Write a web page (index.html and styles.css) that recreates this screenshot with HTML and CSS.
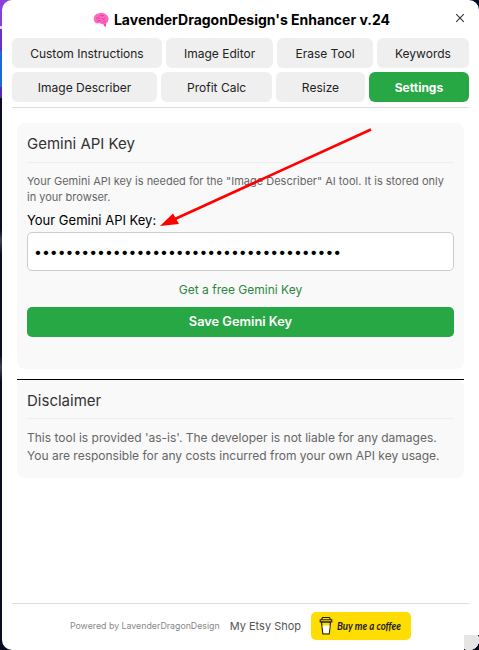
FILE: index.html
```html
<!DOCTYPE html>
<html lang="en">
<head>
<meta charset="utf-8">
<title>LavenderDragonDesign's Enhancer</title>
<link rel="stylesheet" href="styles.css">
</head>
<body>
<div class="panel">
  <header class="header">
    <svg class="brain" viewBox="0 0 16 16"><path d="M1 8.500C0 5.500 2 2 5.200 1.600 8-.2 12 .7 13.500 3c2 1.300 2.500 4 1.600 6-.2 1.500-1.200 2-2 2.200l-.8 3.200-2-2.200C8 12 7 11.600 6.500 11 4 12 2 11.500 1 8.500z" fill="#ff69bd"/><path d="M3 6.500l2-1 1.500 1M7 3l2 1 2-1M9 6.500l2 1 1.500-2M4 9.500l2-1 2 .5M9.500 10l3-.5M11 12l1.300 2.500.5-3" fill="none" stroke="#e829a0" stroke-width=".8"/></svg>
    <h1 class="title">LavenderDragonDesign's Enhancer v.24</h1>
    <button class="close" aria-label="Close"><svg viewBox="0 0 10 10"><path d="M1.200 1.200l7.600 7.600M8.800 1.200L1.200 8.800" stroke="#333" stroke-width="1.100"/></svg></button>
  </header>
  <nav class="tabs">
    <button class="tab">Custom Instructions</button>
    <button class="tab">Image Editor</button>
    <button class="tab">Erase Tool</button>
    <button class="tab">Keywords</button>
    <button class="tab">Image Describer</button>
    <button class="tab">Profit Calc</button>
    <button class="tab">Resize</button>
    <button class="tab active">Settings</button>
  </nav>
  <main class="content">
    <section class="card key-card">
      <h2>Gemini API Key</h2>
      <p class="hint">Your Gemini API key is needed for the "Image Describer" AI tool. It is stored only in your browser.</p>
      <label class="label" for="key">Your Gemini API Key:</label>
      <input class="key" id="key" type="password" value="000000000000000000000000000000000000000">
      <a class="link">Get a free Gemini Key</a>
      <button class="save">Save Gemini Key</button>
    </section>
    <section class="disclaimer">
      <div class="card">
        <h2>Disclaimer</h2>
        <p class="legal">This tool is provided 'as-is'. The developer is not liable for any damages. You are responsible for any costs incurred from your own API key usage.</p>
      </div>
    </section>
  </main>
  <footer class="footer">
    <span class="powered">Powered by LavenderDragonDesign</span>
    <a class="shop">My Etsy Shop</a>
    <a class="coffee">
      <svg class="cup" viewBox="0 0 14 20"><path d="M2.500 6l1.400 12h6.300L11.500 6z" fill="#ffdd00" stroke="#222" stroke-width="1.200"/><path d="M3.500 9.500h7.200l-.9 7.500H4.500z" fill="#fff"/><path d="M1.200 3.800h11.600v2.100H1.200zM2.600 3.800l.8-2.300h7.200l.8 2.300" fill="#ffdd00" stroke="#222" stroke-width="1.100"/></svg>
      <svg class="coffee-text" viewBox="0 0 70 20"><text x="0" y="14" textLength="64" lengthAdjust="spacingAndGlyphs">Buy me a coffee</text></svg>
    </a>
  </footer>
</div>
<div class="resize"></div>
<svg class="arrow" viewBox="0 0 220 110"><path d="M211 9.500L15 99" stroke="#f00" stroke-width="2.600"/><path d="M0 106L13 93.500 19 104z" fill="#f00"/></svg>
</body>
</html>
```
FILE: styles.css
```css
* { box-sizing: border-box; }
body {
  margin: 0;
  height: 650px;
  padding-left: 2px;
  overflow: hidden;
  position: relative;
  font-family: Inter, "Liberation Sans", sans-serif;
  background: linear-gradient(#8a3fdc 0 26px, #e8d8fa 26px 29px, #6a30c4 29px 51px, #1c69d8 51px 87px, #5429b8 87px 98px, #080d22 98px 230px, #3c3f50 240px, #080d22 255px 355px, #3c3f50 367px, #080d22 382px);
}
body::before {
  content: "";
  position: absolute;
  right: 0;
  top: 0;
  width: 20px;
  height: 20px;
  background: #080d22;
}
.panel {
  position: relative;
  height: 650px;
  padding: 8px 10px;
  background: #fff;
  border-radius: 10px;
  display: flex;
  flex-direction: column;
}
button { border: 0; font-family: inherit; }
.header { height: 30px; display: flex; justify-content: center; position: relative; padding-left: 2px; }
.brain { width: 16px; height: 16px; margin: 4px 5px 0 0; }
.title { margin: 0; font-size: 14px; line-height: 24px; font-weight: 700; color: #000; white-space: nowrap; }
.close { position: absolute; right: 4px; top: 5px; width: 10px; height: 10px; padding: 0; background: none; display: flex; }
.tabs { display: flex; flex-wrap: wrap; gap: 4px; padding-bottom: 5px; border-bottom: 1px solid #ddd; }
.tab { flex: 1 1 auto; height: 30px; padding: 0 15px; border-radius: 6px; background: #efefef; color: #222; font-size: 12px; white-space: nowrap; }
.active { background: #28a745; color: #fff; font-weight: 700; }
.content { flex: 1; padding: 15px 5px 0; }
.card { background: #f9f9f9; border-radius: 8px; padding: 10px; }
.key-card { height: 246px; display: flex; flex-direction: column; margin-bottom: 10px; }
h2 { margin: 0 0 10px; height: 30px; padding-bottom: 8px; border-bottom: 1px solid #eee; font-size: 15px; font-weight: 400; line-height: 21px; color: #333; }
.hint { margin: 0; font-size: 11px; line-height: 16px; color: #666; }
.label { margin-top: 6px; font-size: 13px; line-height: 18px; color: #000; }
.key { margin-top: 3px; width: 100%; height: 39px; flex: none; border: 1px solid #ccc; border-radius: 5px; padding: 0 6px; background: #fff; color: #000; font: 14px Inter, sans-serif; }
.link { margin-top: 10px; font-size: 12px; line-height: 18px; text-align: center; color: #2b873e; }
.save { margin-top: 8px; height: 30px; flex: none; border-radius: 5px; background: #28a745; color: #fff; font-size: 12.800px; font-weight: 600; padding-bottom: 2px; }
.disclaimer { border-top: 1px solid #000; }
.disclaimer .card { padding-bottom: 13px; }
.disclaimer h2 { height: 29px; }
.legal { margin: 0; font-size: 12px; line-height: 18px; color: #666; }
.footer { height: 39px; border-top: 1px solid #ddd; display: flex; align-items: flex-start; justify-content: center; gap: 10px; padding-top: 8px; }
.powered { font-size: 8.800px; line-height: 28px; color: #888; }
.shop { font-size: 11px; line-height: 28px; color: #555; }
.coffee { width: 100px; height: 28px; border-radius: 5px; background: #fd0; display: flex; align-items: center; padding-left: 8px; gap: 4px; }
.cup { width: 14px; height: 20px; }
.coffee-text { width: 70px; height: 20px; font: italic 700 10.500px Lato, cursive; fill: #222; }
.resize { position: absolute; right: 0; bottom: 0; width: 15px; height: 15px; background: radial-gradient(circle at 5px 5px, transparent 10px, #080d22 10.500px), #e5e5e5; }
.arrow { position: absolute; left: 160px; top: 120px; width: 220px; height: 110px; }
```
